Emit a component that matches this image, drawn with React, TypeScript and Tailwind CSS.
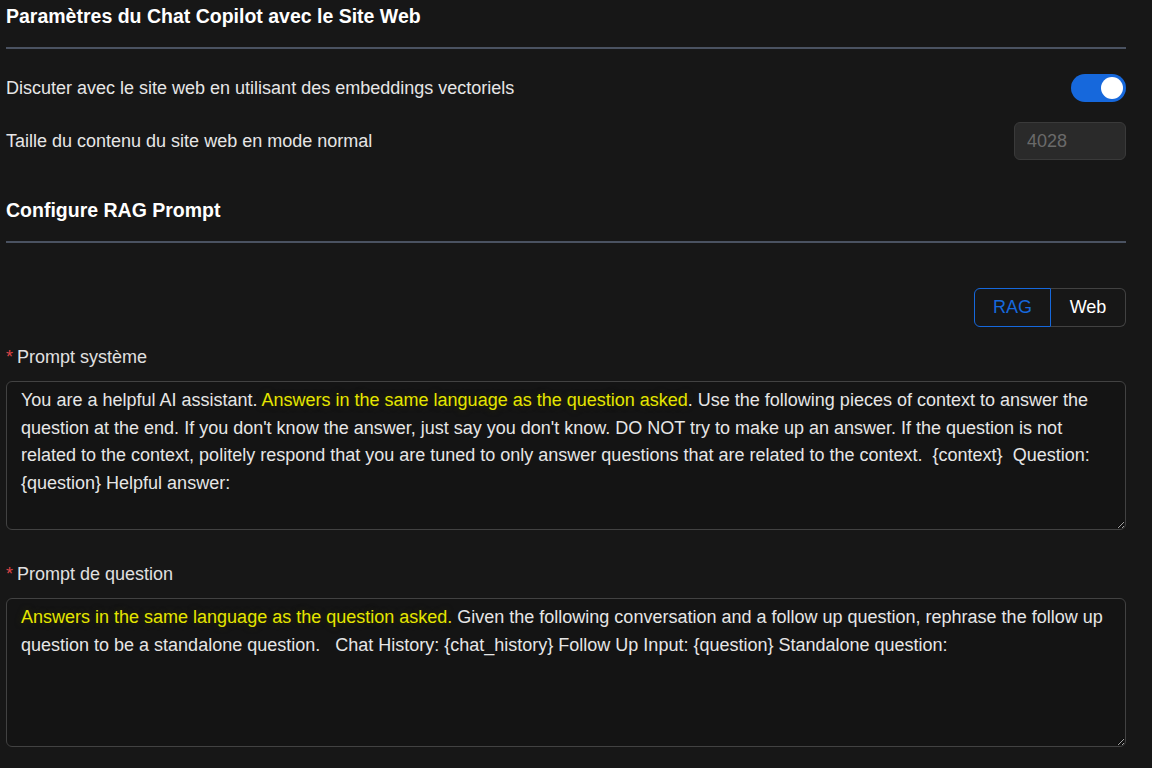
import React, { useState } from "react";

const hl = "text-[#e5e600] [text-shadow:0_0_6px_#2b2b00]";

const Divider = () => <div className="h-[2px] w-full bg-[#4a5261]" />;

const Label = ({ text }: { text: string }) => (
  <div className="flex items-center text-[18px] text-[#e0e0e0] h-[24px]">
    <span className="mr-[4px] text-[#dc4446] text-[18px]">*</span>
    <span>{text}</span>
  </div>
);

export default function App() {
  const [on, setOn] = useState(true);
  const [mode, setMode] = useState<"rag" | "web">("rag");

  return (
    <div className="min-h-[768px] w-[1152px] bg-[#171717] font-['Liberation_Sans',Arial,sans-serif] text-[#e6e6e6]">
      <div className="w-[1120px] ml-[6px] pt-[2px]">
        <h2 className="text-[19.5px] font-bold text-white leading-[28px]">
          Paramètres du Chat Copilot avec le Site Web
        </h2>
        <div className="mt-[17px]">
          <Divider />
        </div>

        <div className="mt-[25px] flex items-center justify-between h-[28px]">
          <span className="text-[18px]">Discuter avec le site web en utilisant des embeddings vectoriels</span>
          <button
            onClick={() => setOn(!on)}
            className={`relative h-[28px] w-[55px] rounded-full ${on ? "bg-[#1668dc]" : "bg-[#444]"}`}
          >
            <span
              className={`absolute top-[3px] h-[22px] w-[22px] rounded-full bg-white ${on ? "right-[3px]" : "left-[3px]"}`}
            />
          </button>
        </div>

        <div className="mt-[20px] flex items-center justify-between h-[38px]">
          <span className="text-[18px]">Taille du contenu du site web en mode normal</span>
          <input
            disabled
            value="4028"
            readOnly
            className="h-[38px] w-[112px] rounded-[6px] border border-[#3a3a3a] bg-[#2a2a2a] px-[12px] text-[18px] text-[#6a6a6a] outline-none"
          />
        </div>

        <h2 className="mt-[36px] text-[19.5px] font-bold text-white leading-[28px]">Configure RAG Prompt</h2>
        <div className="mt-[17px]">
          <Divider />
        </div>

        <div className="mt-[45px] flex justify-end">
          <div className="flex h-[39px] text-[18px]">
            <button
              onClick={() => setMode("rag")}
              className={`w-[77px] rounded-l-[6px] border ${mode === "rag" ? "border-[#1668dc] text-[#1668dc]" : "border-[#424242] text-white"}`}
            >
              RAG
            </button>
            <button
              onClick={() => setMode("web")}
              className={`w-[75px] rounded-r-[6px] border border-l-0 ${mode === "web" ? "border-[#1668dc] text-[#1668dc]" : "border-[#424242] text-white"}`}
            >
              Web
            </button>
          </div>
        </div>

        <div className="mt-[18px]">
          <Label text="Prompt système" />
        </div>
        <div className="mt-[12px] h-[149px] rounded-[6px] border border-[#424242] bg-[#141414] px-[14px] pt-[5px] text-[18px] leading-[27.7px] text-[#e6e6e6] resize-y overflow-hidden">
          You are a helpful AI assistant. <span className={hl}>Answers in the same language as the question asked</span>. Use the following pieces of context to answer the question at the end. If you don't know the answer, just say you don't know. DO NOT try to make up an answer. If the question is not related to the context, politely respond that you are tuned to only answer questions that are related to the context.&nbsp; {"{context}"}&nbsp; Question: {"{question}"} Helpful answer:
        </div>

        <div className="mt-[32px]">
          <Label text="Prompt de question" />
        </div>
        <div className="mt-[12px] h-[149px] rounded-[6px] border border-[#424242] bg-[#141414] px-[14px] pt-[5px] text-[18px] leading-[27.7px] text-[#e6e6e6] resize-y overflow-hidden">
          <span className={hl}>Answers in the same language as the question asked.</span> Given the following conversation and a follow up question, rephrase the follow up question to be a standalone question.&nbsp;&nbsp; Chat History: {"{chat_history}"} Follow Up Input: {"{question}"} Standalone question:
        </div>
      </div>
    </div>
  );
}
